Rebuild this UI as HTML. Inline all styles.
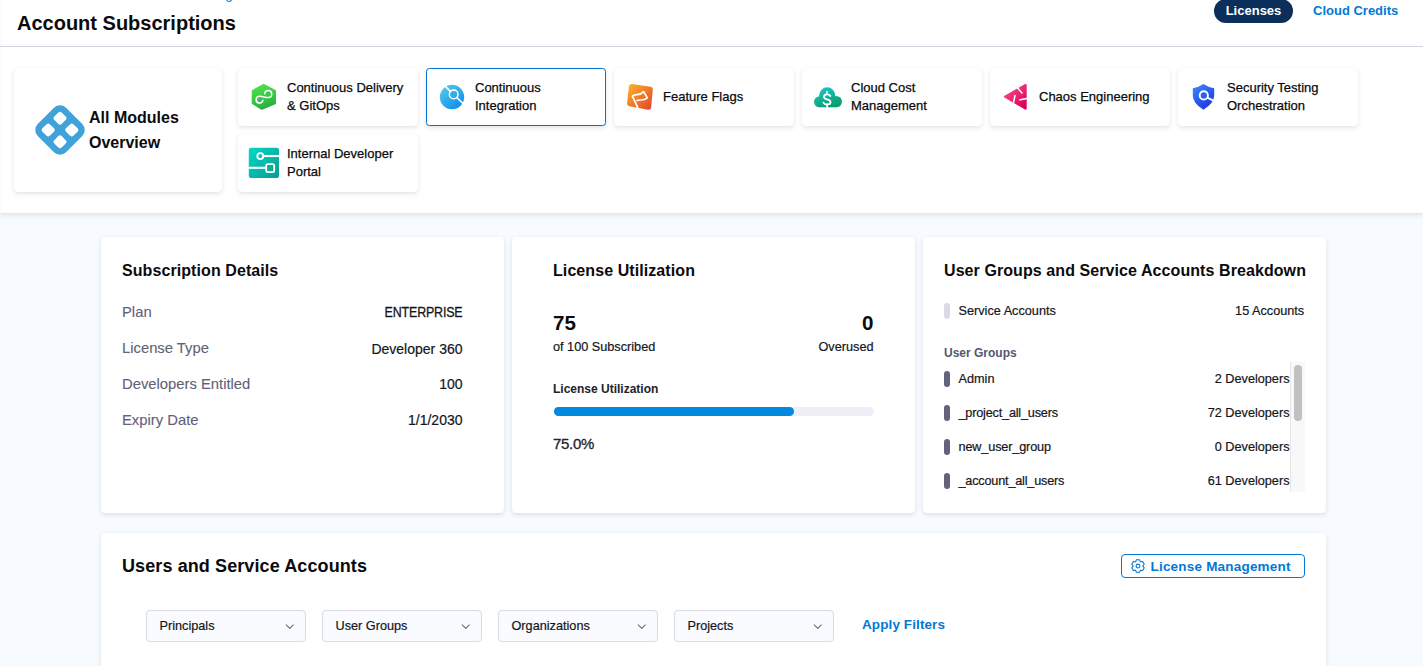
<!DOCTYPE html>
<html><head><meta charset="utf-8">
<style>
*{box-sizing:border-box;margin:0;padding:0}
html,body{width:1423px;height:666px;overflow:hidden;background:#f7fafe;font-family:"Liberation Sans",sans-serif;color:#0b0b0d}
.a{position:absolute;white-space:nowrap}
#header{position:absolute;left:0;top:0;width:1423px;height:47px;background:#fff;border-bottom:1px solid #d9dae6}
#crumb{position:absolute;left:226px;top:-3px;width:6px;height:4.5px;border:1.6px solid #0278d5;border-top:none;border-radius:0 0 3px 3px}
#title{left:17px;top:11px;font-size:20px;font-weight:700;line-height:24px;color:#0b0b0d}
#pill{left:1214px;top:-1px;width:79px;height:24px;border-radius:12px;background:#0b2e5b;color:#fff;font-size:13px;font-weight:700;line-height:24px;text-align:center}
#cc{left:1313px;top:3px;font-size:13px;font-weight:700;color:#0278d5;line-height:16px}
#modules{position:absolute;left:0;top:47px;width:1423px;height:166px;background:#fff;box-shadow:0 0 1px rgba(40,41,61,0.08),0 2px 5px rgba(96,97,112,0.16)}
.mc{position:absolute;background:#fff;border-radius:4px;box-shadow:0 0 1px rgba(40,41,61,0.08),0 2px 4px rgba(96,97,112,0.16)}
.mc svg{position:absolute;left:8px;top:12px;width:36px;height:36px}
.mc .tx{position:absolute;left:49px;top:10.5px;width:128px;font-size:13px;line-height:18px;color:#0b0b0d;white-space:normal;-webkit-text-stroke:0.25px #0b0b0d}
.mc.one .tx{top:19.5px}
.mc.sel{border:1px solid #0472d2;border-radius:3.5px}
.mc.sel .tx{left:48px;top:9.5px}
.mc.sel svg{left:7px;top:11px}
.card{position:absolute;background:#fff;border-radius:4px;box-shadow:0 0 1px rgba(40,41,61,0.08),0 2px 4px rgba(96,97,112,0.16)}
.h3{font-size:16px;font-weight:700;line-height:20px;color:#0b0b0d;letter-spacing:0.08px}
.lbl{font-size:14.8px;color:#5f6179;line-height:18px;-webkit-text-stroke:0.1px #5f6179}
.val{font-size:14px;color:#15151b;line-height:18px;text-align:right;-webkit-text-stroke:0.2px #15151b}
.sm{font-size:12.7px;line-height:16px;color:#15151b;-webkit-text-stroke:0.2px #15151b}
.dd{position:absolute;top:77px;width:160px;height:32px;border:1px solid #d9dae6;border-radius:4px;background:#f9fbfe}
.dd span{position:absolute;left:12.5px;top:6.5px;font-size:12.7px;line-height:16px;color:#15151b;-webkit-text-stroke:0.2px #15151b}
.dd svg{position:absolute;left:137.5px;top:12px;width:9.5px;height:7px}
.bar{position:absolute;left:20px;width:6px;height:16px;border-radius:3px;background:#62647b}
</style></head><body>
<div style="position:absolute;left:0;top:0;width:2px;height:213px;background:rgba(0,0,0,0.015);z-index:5"></div>
<div id="header">
  <div id="crumb"></div>
  <div id="title" class="a">Account Subscriptions</div>
  <div id="pill" class="a">Licenses</div>
  <div id="cc" class="a">Cloud Credits</div>
</div>
<div id="modules">
  <div class="mc" style="left:14px;top:21px;width:208px;height:124px">
    <svg style="left:18px;top:34px;width:56px;height:56px" viewBox="0 0 56 56"><g transform="rotate(45 28 28)"><path fill="#3fa3d9" fill-rule="evenodd" d="M16.50 8.00h23.00a8.5 8.5 0 0 1 8.5 8.5v23.00a8.5 8.5 0 0 1 -8.5 8.5h-23.00a8.5 8.5 0 0 1 -8.5 -8.5v-23.00a8.5 8.5 0 0 1 8.5 -8.5zM16.76 14.46h5.80a2.3 2.3 0 0 1 2.3 2.3v5.80a2.3 2.3 0 0 1 -2.3 2.3h-5.80a2.3 2.3 0 0 1 -2.3 -2.3v-5.80a2.3 2.3 0 0 1 2.3 -2.3zM16.76 31.14h5.80a2.3 2.3 0 0 1 2.3 2.3v5.80a2.3 2.3 0 0 1 -2.3 2.3h-5.80a2.3 2.3 0 0 1 -2.3 -2.3v-5.80a2.3 2.3 0 0 1 2.3 -2.3zM33.44 14.46h5.80a2.3 2.3 0 0 1 2.3 2.3v5.80a2.3 2.3 0 0 1 -2.3 2.3h-5.80a2.3 2.3 0 0 1 -2.3 -2.3v-5.80a2.3 2.3 0 0 1 2.3 -2.3zM33.44 31.14h5.80a2.3 2.3 0 0 1 2.3 2.3v5.80a2.3 2.3 0 0 1 -2.3 2.3h-5.80a2.3 2.3 0 0 1 -2.3 -2.3v-5.80a2.3 2.3 0 0 1 2.3 -2.3z"/></g></svg>
    <div class="a" style="left:75px;top:38.1px;font-size:16px;font-weight:700;line-height:24.4px;white-space:normal;width:120px">All Modules Overview</div>
  </div>
  <div class="mc" style="left:238px;top:21px;width:180px;height:58px"><svg viewBox="0 0 36 36"><defs><linearGradient id="gcd" x1="0" y1="0" x2="0.3" y2="1"><stop offset="0" stop-color="#4fe64b"/><stop offset="1" stop-color="#2cb244"/></linearGradient></defs>
<polygon points="17.6,4.9 29,10.9 29,23.4 15.9,28.9 6.7,23.2 6.7,10.9" fill="url(#gcd)" stroke="url(#gcd)" stroke-width="2" stroke-linejoin="round"/>
<path d="M16.89 20.21A3.4 3.4 0 1 1 13.54 16.22C17 16.22 19 17.58 22.19 17.58A3.5 3.5 0 1 0 18.71 13.71" fill="none" stroke="#fff" stroke-width="1.5" stroke-linecap="round"/></svg><div class="tx">Continuous Delivery &amp; GitOps</div></div>
  <div class="mc sel" style="left:426px;top:21px;width:180px;height:58px"><svg viewBox="0 0 36 36"><defs><linearGradient id="gci" gradientUnits="userSpaceOnUse" x1="8" y1="6" x2="26" y2="29"><stop offset="0" stop-color="#55cbe6"/><stop offset="1" stop-color="#0b8bf0"/></linearGradient></defs>
<circle cx="18" cy="17.05" r="12.2" fill="url(#gci)"/>
<line x1="10.5" y1="5.6" x2="29" y2="23.5" stroke="#fff" stroke-width="1.7"/>
<circle cx="19.7" cy="14.4" r="4.25" fill="none" stroke="#fff" stroke-width="1.7"/>
<circle cx="19.7" cy="14.4" r="3.45" fill="url(#gci)"/></svg><div class="tx">Continuous Integration</div></div>
  <div class="mc one" style="left:614px;top:21px;width:180px;height:58px"><svg viewBox="0 0 36 36"><defs><linearGradient id="gff" x1="0" y1="0" x2="1" y2="1"><stop offset="0" stop-color="#fca829"/><stop offset="1" stop-color="#e54f2b"/></linearGradient></defs>
<path d="M9.7 6.8 L28 9.6 L26.4 27 L7.9 23.4 Z" fill="url(#gff)" stroke="url(#gff)" stroke-width="5.6" stroke-linejoin="round"/>
<path d="M16 28.2 L10.4 16.2 C13.5 13.5 17.5 16.2 21.6 11.6 L25.3 17.8 C21 21.6 17.8 18.8 14.4 20.8" fill="none" stroke="#fff" stroke-width="1.7" stroke-linejoin="round"/></svg><div class="tx">Feature Flags</div></div>
  <div class="mc" style="left:802px;top:21px;width:180px;height:58px"><svg viewBox="0 0 36 36"><defs><linearGradient id="gccm" gradientUnits="userSpaceOnUse" x1="12" y1="7" x2="20" y2="28"><stop offset="0" stop-color="#1ac6c4"/><stop offset="1" stop-color="#089c6b"/></linearGradient></defs>
<g fill="url(#gccm)"><circle cx="9.5" cy="21.8" r="5.5"/><circle cx="26.2" cy="21.6" r="5.7"/><circle cx="17.2" cy="15.3" r="8"/><rect x="9.5" y="18" width="16.7" height="9.3"/></g>
<path d="M20.4 16 Q19.6 14.3 17 14.3 Q14 14.3 14 16.8 Q14 18.7 17 19.3 Q20.5 19.9 20.5 22.2 Q20.5 24.5 17 24.5 Q14.4 24.5 13.4 22.6" fill="none" stroke="#fff" stroke-width="1.8" stroke-linecap="round"/>
<line x1="16.9" y1="11.6" x2="16.9" y2="14.3" stroke="#fff" stroke-width="1.6" stroke-linecap="round"/>
<line x1="17.1" y1="24.5" x2="17.1" y2="28" stroke="#fff" stroke-width="1.6"/></svg><div class="tx">Cloud Cost Management</div></div>
  <div class="mc one" style="left:990px;top:21px;width:180px;height:58px"><svg viewBox="0 0 36 36"><defs><linearGradient id="gce" x1="0" y1="0" x2="0.8" y2="1"><stop offset="0" stop-color="#fa5593"/><stop offset="1" stop-color="#dc005a"/></linearGradient></defs>
<path d="M7 16.6 L27.6 5 L27.6 28.6 Z" fill="url(#gce)" stroke="url(#gce)" stroke-width="2.2" stroke-linejoin="round"/>
<path d="M19.2 7.4 L24.4 13.4 M21.2 20.1 L30 18.3 M17.1 15 L15.2 24" fill="none" stroke="#fff" stroke-width="1.5"/></svg><div class="tx">Chaos Engineering</div></div>
  <div class="mc" style="left:1178px;top:21px;width:180px;height:58px"><svg viewBox="0 0 36 36"><defs><linearGradient id="gsto" x1="0" y1="0" x2="0.6" y2="1"><stop offset="0" stop-color="#3e8bf9"/><stop offset="1" stop-color="#1c39e4"/></linearGradient></defs>
<path d="M17.4 4 Q22.4 7.4 28.2 8.2 L28.2 15.6 Q28 23.6 17.4 29.7 Q6.9 23.6 6.8 15.6 L6.8 8.2 Q12.4 7.4 17.4 4 Z" fill="url(#gsto)"/>
<circle cx="17.8" cy="15.4" r="4.1" fill="none" stroke="#fff" stroke-width="1.9"/>
<line x1="21.2" y1="17.6" x2="29" y2="21.4" stroke="#fff" stroke-width="2"/></svg><div class="tx">Security Testing Orchestration</div></div>
  <div class="mc" style="left:238px;top:87px;width:180px;height:58px"><svg viewBox="0 0 36 36"><defs><linearGradient id="gidp" x1="0" y1="0" x2="1" y2="1"><stop offset="0" stop-color="#02d8c8"/><stop offset="1" stop-color="#0a9c8e"/></linearGradient></defs>
<rect x="2.8" y="1.8" width="30.2" height="30.2" rx="2" fill="url(#gidp)"/>
<circle cx="14.3" cy="10.1" r="3.0" fill="none" stroke="#fff" stroke-width="1.9"/>
<line x1="17.2" y1="10" x2="33" y2="10" stroke="#fff" stroke-width="2.1"/>
<rect x="20.2" y="18.2" width="8" height="8" rx="1.6" fill="none" stroke="#fff" stroke-width="1.8"/>
<line x1="2.8" y1="21.8" x2="20" y2="21.8" stroke="#fff" stroke-width="2.1"/></svg><div class="tx">Internal Developer Portal</div></div>
</div>

<div class="card" style="left:101px;top:237px;width:403px;height:276px">
  <div class="a h3" style="left:21px;top:23.5px">Subscription Details</div>
  <div class="a lbl" style="left:21px;top:66px">Plan</div>
  <div class="a lbl" style="left:21px;top:102px">License Type</div>
  <div class="a lbl" style="left:21px;top:138px">Developers Entitled</div>
  <div class="a lbl" style="left:21px;top:174px">Expiry Date</div>
  <div class="a val" style="right:41.5px;top:65.6px;font-size:14px;letter-spacing:-0.2px;transform:scaleX(0.89);transform-origin:100% 50%;-webkit-text-stroke:0.3px #15151b">ENTERPRISE</div>
  <div class="a val" style="right:41.5px;top:102.5px">Developer 360</div>
  <div class="a val" style="right:41.5px;top:138px">100</div>
  <div class="a val" style="right:41.5px;top:174px">1/1/2030</div>
</div>

<div class="card" style="left:512px;top:237px;width:403px;height:276px">
  <div class="a h3" style="left:41px;top:23.5px">License Utilization</div>
  <div class="a" style="left:41px;top:74.3px;font-size:20.6px;font-weight:700;line-height:24px">75</div>
  <div class="a" style="right:41.5px;top:74.3px;font-size:20.6px;font-weight:700;line-height:24px">0</div>
  <div class="a sm" style="left:41px;top:101.6px">of 100 Subscribed</div>
  <div class="a sm" style="right:41.5px;top:101.6px">Overused</div>
  <div class="a" style="left:41px;top:143.7px;font-size:12px;font-weight:700;line-height:16px;color:#22222a">License Utilization</div>
  <div class="a" style="left:41.5px;top:169.5px;width:320px;height:9px;border-radius:4.5px;background:#efeff8"></div>
  <div class="a" style="left:41.5px;top:169.5px;width:240px;height:9px;border-radius:4.5px;background:#0288dc"></div>
  <div class="a" style="left:41px;top:198.3px;font-size:15px;line-height:18px;color:#22222a;letter-spacing:-0.3px;-webkit-text-stroke:0.3px #22222a">75.0%</div>
</div>

<div class="card" style="left:923px;top:237px;width:403px;height:276px">
  <div class="a h3" style="left:21px;top:23.5px">User Groups and Service Accounts Breakdown</div>
  <div class="bar" style="left:21px;top:66px;background:#d9dae6"></div>
  <div class="a sm" style="left:35.5px;top:65.8px">Service Accounts</div>
  <div class="a sm" style="right:21.8px;top:65.8px">15 Accounts</div>
  <div class="a" style="left:21px;top:108.2px;font-size:12px;font-weight:700;line-height:16px;color:#555770">User Groups</div>
  <div class="a" style="left:21px;top:125px;width:360.5px;height:130px;overflow:hidden">
    <div class="bar" style="left:0;top:9.3px"></div>
    <div class="a sm" style="left:14.5px;top:8.9px">Admin</div>
    <div class="a sm" style="right:15px;top:8.9px">2 Developers</div>
    <div class="bar" style="left:0;top:43.3px"></div>
    <div class="a sm" style="left:14.5px;top:42.9px;letter-spacing:-0.2px">_project_all_users</div>
    <div class="a sm" style="right:15px;top:42.9px">72 Developers</div>
    <div class="bar" style="left:0;top:77.3px"></div>
    <div class="a sm" style="left:14.5px;top:76.9px;letter-spacing:-0.15px">new_user_group</div>
    <div class="a sm" style="right:15px;top:76.9px">0 Developers</div>
    <div class="bar" style="left:0;top:111.3px"></div>
    <div class="a sm" style="left:14.5px;top:110.9px;letter-spacing:-0.2px">_account_all_users</div>
    <div class="a sm" style="right:15px;top:110.9px">61 Developers</div>
    <div class="a" style="left:346px;top:0;width:14.5px;height:130px;background:#f8f8f8;border-left:1px solid #e6e6e6"></div>
    <div class="a" style="left:350px;top:3px;width:8px;height:55.5px;border-radius:4px;background:#c1c1c1"></div>
  </div>
</div>

<div class="card" style="left:101px;top:533px;width:1225px;height:200px">
  <div class="a" style="left:21px;top:22px;font-size:18px;font-weight:700;line-height:22px;letter-spacing:0.1px">Users and Service Accounts</div>
  <div class="a" style="left:1020px;top:21px;width:184px;height:24px;border:1px solid #0278d5;border-radius:4px">
    <svg class="a" style="left:8px;top:3px;width:16px;height:16px" viewBox="0 0 16 16"><path d="M5.70 3.67 L6.43 1.69 L9.57 1.69 L10.30 3.67 L10.60 3.84 L12.68 3.48 L14.25 6.21 L12.90 7.83 L12.90 8.17 L14.25 9.79 L12.68 12.52 L10.60 12.16 L10.30 12.33 L9.57 14.31 L6.43 14.31 L5.70 12.33 L5.40 12.16 L3.32 12.52 L1.75 9.79 L3.10 8.17 L3.10 7.83 L1.75 6.21 L3.32 3.48 L5.40 3.84Z" fill="none" stroke="#0278d5" stroke-width="1.05" stroke-linejoin="round"/><circle cx="8" cy="8" r="1.9" fill="none" stroke="#0278d5" stroke-width="1.05"/></svg>
    <div class="a" style="left:28.5px;top:3.5px;font-size:13.5px;font-weight:700;line-height:16px;color:#0278d5;letter-spacing:0.2px">License Management</div>
  </div>
  <div class="dd" style="left:45px"><span>Principals</span><svg viewBox="0 0 10 7"><path d="M1 1.5 L5 5.5 L9 1.5" fill="none" stroke="#6b6d85" stroke-width="1.1"/></svg></div>
  <div class="dd" style="left:221px"><span>User Groups</span><svg viewBox="0 0 10 7"><path d="M1 1.5 L5 5.5 L9 1.5" fill="none" stroke="#6b6d85" stroke-width="1.1"/></svg></div>
  <div class="dd" style="left:397px"><span>Organizations</span><svg viewBox="0 0 10 7"><path d="M1 1.5 L5 5.5 L9 1.5" fill="none" stroke="#6b6d85" stroke-width="1.1"/></svg></div>
  <div class="dd" style="left:573px"><span>Projects</span><svg viewBox="0 0 10 7"><path d="M1 1.5 L5 5.5 L9 1.5" fill="none" stroke="#6b6d85" stroke-width="1.1"/></svg></div>
  <div class="a" style="left:761px;top:84px;font-size:13.5px;font-weight:700;line-height:16px;color:#0278d5;letter-spacing:0.1px">Apply Filters</div>
</div>
</body></html>
